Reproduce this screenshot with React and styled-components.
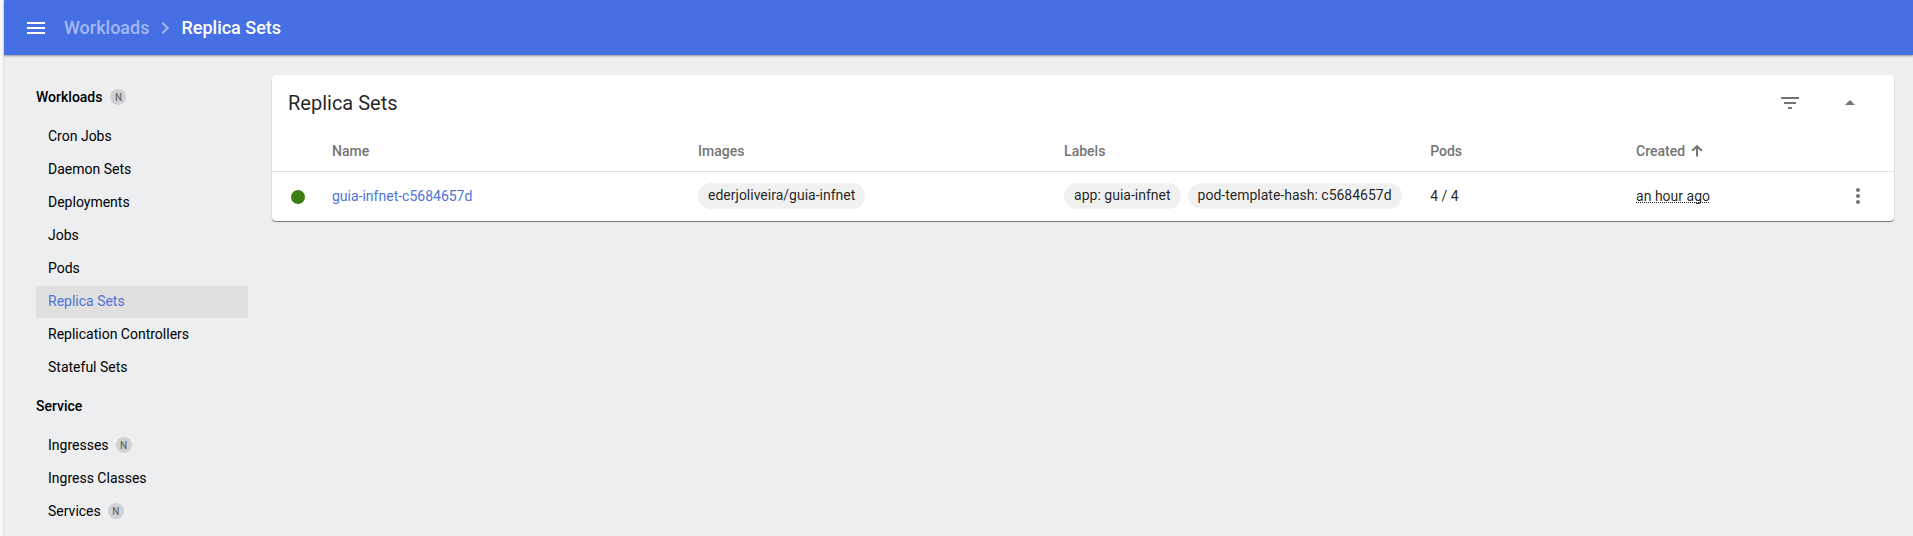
import React from "react";
import styled, { createGlobalStyle } from "styled-components";
import { MdMenu, MdChevronRight, MdFilterList, MdArrowDropUp, MdMoreVert } from "react-icons/md";

const GlobalStyle = createGlobalStyle`
  *, *::before, *::after { box-sizing: border-box; }
  body {
    margin: 0;
    background: #eceef0;
    color: rgba(0, 0, 0, 0.87);
    font: 400 14px/20px Roboto, "Liberation Sans", sans-serif;
  }
  a { color: inherit; text-decoration: none; }
`;

const Page = styled.div`
  display: flex;
  flex-direction: column;
  min-height: 100vh;
  border-left: 4px solid #f8f8f9;
`;

const Toolbar = styled.header`
  display: flex;
  align-items: center;
  height: 55px;
  padding: 0 20px;
  background: #456fe3;
  color: #fff;
  box-shadow: 0 1px 2px rgba(0, 0, 0, 0.4);
`;

const IconButton = styled.button`
  display: flex;
  align-items: center;
  justify-content: center;
  padding: 0;
  border: 0;
  background: none;
  color: inherit;
  cursor: pointer;
`;

const Breadcrumbs = styled.nav`
  display: flex;
  align-items: center;
  gap: 4px;
  margin-left: 16px;
  font-size: 18px;
  font-weight: 500;
  color: #a5b8f3;
`;

const CurrentCrumb = styled.span`
  color: #fff;
`;

const Body = styled.div`
  display: flex;
  flex: 1;
  align-items: flex-start;
  box-shadow: -1px 0 0 #dfe0e2;
`;

const Sidebar = styled.nav`
  flex: none;
  width: 268px;
  padding: 20px 24px 0 32px;
  color: #000;
`;

const GroupLink = styled.a`
  display: flex;
  align-items: center;
  gap: 8px;
  height: 44px;
  margin-bottom: 2px;
  font-weight: 500;
`;

const NavList = styled.ul`
  display: flex;
  flex-direction: column;
  gap: 1px;
  margin: 0;
  padding: 0;
  list-style: none;
`;

const NavLink = styled.a`
  display: flex;
  align-items: center;
  gap: 7px;
  height: 32px;
  padding: 0 12px 2px;
  border-radius: 2px;
  background: ${(p) => (p.$active ? "#e0e0e0" : "transparent")};
  color: ${(p) => (p.$active ? "#4f73d8" : "inherit")};
`;

const Badge = styled.span`
  width: 16px;
  height: 16px;
  border-radius: 50%;
  background: #cfd1d3;
  color: #707070;
  font-size: 10px;
  font-weight: 500;
  line-height: 17px;
  text-align: center;
`;

const Main = styled.main`
  flex: 1;
  min-width: 0;
  padding: 20px 19px 20px 0;
`;

const Card = styled.section`
  border-radius: 4px;
  background: #fff;
  box-shadow: 0 1px 1px rgba(0, 0, 0, 0.5);
`;

const CardHeader = styled.div`
  display: flex;
  align-items: center;
  height: 56px;
  padding: 0 32px 0 16px;
`;

const CardTitle = styled.h1`
  flex: 1;
  margin: 0;
  font-size: 20px;
  line-height: 24px;
  font-weight: 400;
`;

const CardActions = styled.div`
  display: flex;
  gap: 36px;
  color: #757575;
`;

const Table = styled.table`
  display: block;
`;

const TableHead = styled.thead`
  display: block;
`;

const TableBody = styled.tbody`
  display: block;
`;

const Row = styled.tr`
  display: grid;
  grid-template-columns: 60px 16fr 16fr 16fr 9fr 9fr 52px;
  align-items: center;
  height: ${(p) => (p.$head ? "41px" : "49px")};
  padding-bottom: ${(p) => (p.$head ? "0" : "1px")};
  border-bottom: ${(p) => (p.$head ? "1px solid #e0e0e0" : "0")};
`;

const HeadCell = styled.th`
  padding: 0;
  text-align: left;
  font-weight: 500;
  color: #757575;
`;

const Cell = styled.td`
  padding: 0;
`;

const StatusCell = styled(Cell)`
  padding: 2px 0 0 19px;
`;

const ActionCell = styled(Cell)`
  padding-left: 4px;
  color: #757575;
`;

const StatusDot = styled.span`
  display: block;
  width: 14px;
  height: 14px;
  border-radius: 50%;
  background: #3b7f11;
`;

const SortButton = styled(IconButton)`
  gap: 6px;
  font: inherit;
`;

const NameLink = styled.a`
  && { color: #4f73d8; }
`;

const Chips = styled.div`
  display: flex;
  gap: 7px;
`;

const Chip = styled.span`
  height: 26px;
  padding: 0 10px;
  border-radius: 13px;
  background: #f1f1f1;
  line-height: 25px;
  white-space: nowrap;
`;

const Age = styled.time`
  text-decoration: underline dotted 1px;
  text-decoration-skip-ink: none;
  text-underline-offset: 1px;
`;

const groups = [
  {
    name: "Workloads",
    badge: true,
    items: [
      { name: "Cron Jobs" },
      { name: "Daemon Sets" },
      { name: "Deployments" },
      { name: "Jobs" },
      { name: "Pods" },
      { name: "Replica Sets", active: true },
      { name: "Replication Controllers" },
      { name: "Stateful Sets" },
    ],
  },
  {
    name: "Service",
    items: [
      { name: "Ingresses", badge: true },
      { name: "Ingress Classes" },
      { name: "Services", badge: true },
    ],
  },
];

const replicaSets = [
  {
    name: "guia-infnet-c5684657d",
    images: ["ederjoliveira/guia-infnet"],
    labels: ["app: guia-infnet", "pod-template-hash: c5684657d"],
    pods: "4 / 4",
    created: "an hour ago",
  },
];

function SortArrow() {
  return (
    <svg width="12" height="12" viewBox="0 0 12 12" fill="none" stroke="currentColor" strokeWidth="2" aria-hidden="true">
      <path d="M6 11.5V1.5M1.2 5.8L6 1.2L10.8 5.8" />
    </svg>
  );
}

export default function App() {
  return (
    <>
      <GlobalStyle />
      <Page>
        <Toolbar>
          <IconButton aria-label="Toggle navigation">
            <MdMenu size={24} />
          </IconButton>
          <Breadcrumbs aria-label="Breadcrumb">
            <a href="#workloads">Workloads</a>
            <MdChevronRight size={24} />
            <CurrentCrumb aria-current="page">Replica Sets</CurrentCrumb>
          </Breadcrumbs>
        </Toolbar>
        <Body>
          <Sidebar aria-label="Resources">
            {groups.map((group) => (
              <React.Fragment key={group.name}>
                <GroupLink href="#group">
                  {group.name}
                  {group.badge && <Badge>N</Badge>}
                </GroupLink>
                <NavList>
                  {group.items.map((item) => (
                    <li key={item.name}>
                      <NavLink href="#resource" $active={item.active}>
                        {item.name}
                        {item.badge && <Badge>N</Badge>}
                      </NavLink>
                    </li>
                  ))}
                </NavList>
              </React.Fragment>
            ))}
          </Sidebar>
          <Main>
            <Card>
              <CardHeader>
                <CardTitle>Replica Sets</CardTitle>
                <CardActions>
                  <IconButton aria-label="Filter">
                    <MdFilterList size={24} />
                  </IconButton>
                  <IconButton aria-label="Collapse">
                    <MdArrowDropUp size={24} />
                  </IconButton>
                </CardActions>
              </CardHeader>
              <Table>
                <TableHead>
                  <Row $head>
                    <HeadCell aria-label="Status" />
                    <HeadCell>Name</HeadCell>
                    <HeadCell>Images</HeadCell>
                    <HeadCell>Labels</HeadCell>
                    <HeadCell>Pods</HeadCell>
                    <HeadCell aria-sort="ascending">
                      <SortButton>
                        Created
                        <SortArrow />
                      </SortButton>
                    </HeadCell>
                    <HeadCell aria-label="Actions" />
                  </Row>
                </TableHead>
                <TableBody>
                  {replicaSets.map((set) => (
                    <Row key={set.name}>
                      <StatusCell>
                        <StatusDot role="img" aria-label="Running" />
                      </StatusCell>
                      <Cell>
                        <NameLink href="#replicaset">{set.name}</NameLink>
                      </Cell>
                      <Cell>
                        <Chips>
                          {set.images.map((image) => (
                            <Chip key={image}>{image}</Chip>
                          ))}
                        </Chips>
                      </Cell>
                      <Cell>
                        <Chips>
                          {set.labels.map((label) => (
                            <Chip key={label}>{label}</Chip>
                          ))}
                        </Chips>
                      </Cell>
                      <Cell>{set.pods}</Cell>
                      <Cell>
                        <Age>{set.created}</Age>
                      </Cell>
                      <ActionCell>
                        <IconButton aria-label="More actions">
                          <MdMoreVert size={24} />
                        </IconButton>
                      </ActionCell>
                    </Row>
                  ))}
                </TableBody>
              </Table>
            </Card>
          </Main>
        </Body>
      </Page>
    </>
  );
}
